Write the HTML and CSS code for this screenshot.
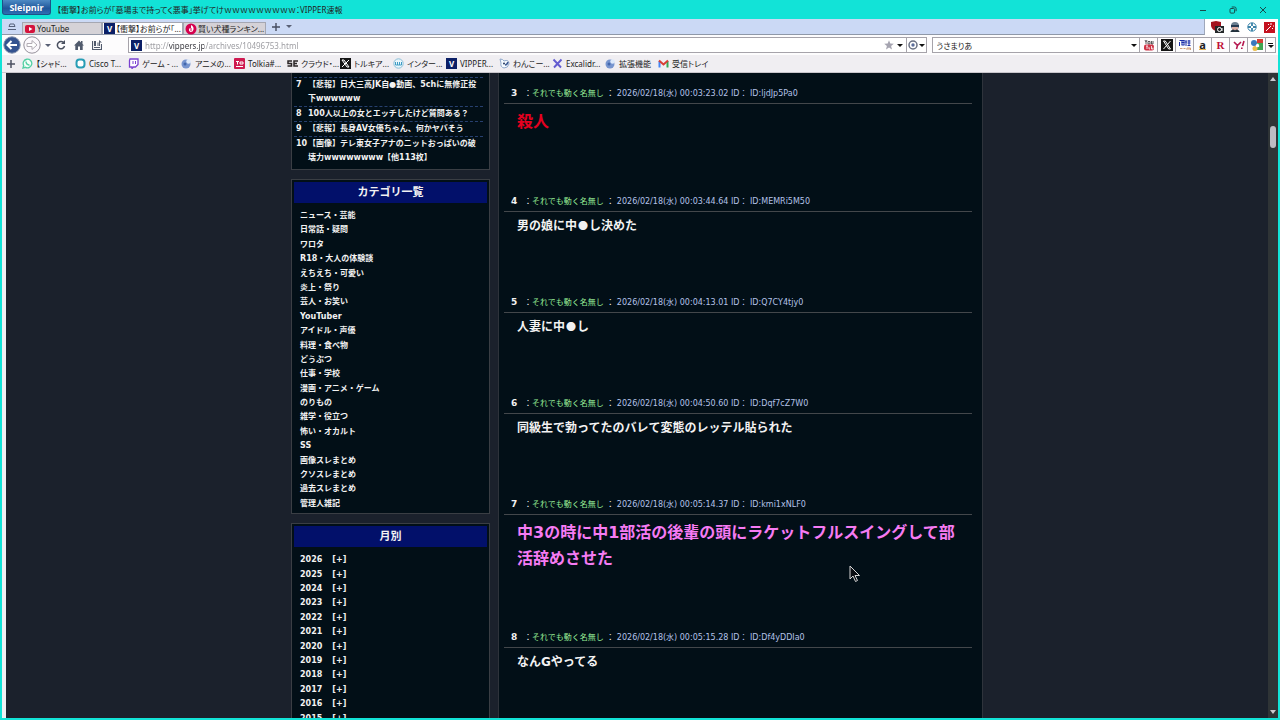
FILE: index.html
```html
<!DOCTYPE html>
<html lang="ja">
<head>
  <meta charset="UTF-8" />
  <meta name="viewport" content="width=device-width, initial-scale=1.0" />
  <title>VIPPER速報</title>
  <link rel="stylesheet" href="styles.css">
</head>
<body>
  <!-- Title bar -->
  <header class="titlebar">
    <button class="app-button" type="button">Sleipnir</button>
    <span class="window-title">【衝撃】お前らが「墓場まで持ってく悪事」挙げてけｗｗｗｗｗｗｗｗｗ：VIPPER速報</span>
    <div class="window-buttons">
      <button type="button" aria-label="最小化"><svg width="8" height="8" viewBox="0 0 8 8"><path d="M1 4.5h6" /></svg></button>
      <button type="button" aria-label="元に戻す"><svg width="8" height="8" viewBox="0 0 8 8"><rect x="1" y="2.5" width="4.6" height="4.6" rx="1" /><path d="M2.7 1h2.8q1.6 0 1.6 1.6v2.6" /></svg></button>
      <button type="button" aria-label="閉じる"><svg width="8" height="8" viewBox="0 0 8 8"><path d="M1 1l6 6M7 1l-6 6" /></svg></button>
    </div>
  </header>

  <div class="window">
    <!-- Tabs -->
    <nav class="tabbar">
      <div class="tabs">
        <button class="tab-list" type="button" aria-label="タブ一覧"><svg width="10" height="10" viewBox="0 0 10 10"><path d="M3 2h4M2 4.5h6M1 7.5h8M3 2L2 4.500M7 2l1 2.500" fill="none" stroke="#55607a" /></svg></button>
        <a class="tab" href="#"><svg width="12" height="10" viewBox="0 0 12 10"><rect x="1" y="1" width="10" height="8" rx="2" fill="#d5123c" /><path d="M5 3l3.500 2L5 7z" fill="#fff" /></svg>YouTube</a>
        <a class="tab active" href="#"><span class="v-icon">V</span>【衝撃】お前らが「...</a>
        <a class="tab" href="#"><svg width="12" height="12" viewBox="0 0 12 12"><circle cx="6" cy="6" r="5.500" fill="#d6004f" /><path d="M6 2q3 1.500 2.500 4.500Q8 9 5.500 9 3.500 8.500 4 6q.5-1 2-1z" fill="#fff" /><path d="M6 5v3" stroke="#d6004f" /></svg>賢い犬種ランキン...</a>
        <button class="tab-new" type="button" aria-label="新しいタブ"><svg width="10" height="10" viewBox="0 0 10 10"><path d="M5 1v8M1 5h8" stroke="#454c5e" stroke-width="1.400" /></svg></button>
        <span class="caret"></span>
      </div>
      <div class="extensions">
        <svg width="14" height="14" viewBox="0 0 14 14"><path d="M1 2l5-1 5 1v4q-1 4-5 5-4-1-5-5z" fill="#a3141f" /><rect x="5" y="6" width="9" height="7" fill="#24282a" /><circle cx="9.500" cy="9.500" r="2" fill="none" stroke="#fff" /><path d="M12 8v3" stroke="#fff" /></svg>
        <svg width="12" height="12" viewBox="0 0 12 12"><circle cx="6" cy="5" r="4" fill="#6c7f90" /><path d="M3 5.500h6V9H3z" fill="#dcaea4" /><rect x="2" y="4" width="8" height="2" fill="#263b52" /><path d="M1.500 11q0-2 3-2.500l1.500.8 1.500-.8q3 .5 3 2.500z" fill="#23313d" /></svg>
        <svg width="12" height="12" viewBox="0 0 12 12"><circle cx="6" cy="6" r="4.200" fill="#fff" stroke="#3a83a8" /><path d="M6 2v3M6 7v3M2 6h3M7 6h3" stroke="#3a83a8" stroke-width="1.800" /></svg>
        <svg width="12" height="12" viewBox="0 0 12 12"><rect x="1" y="1" width="11" height="11" fill="#c41220" /><path d="M3 10l5-5M8 2v2M10 5h1M5 3l1 1M9 7l1 1" stroke="#fff" /></svg>
      </div>
    </nav>

    <!-- Address bar, search box -->
    <div class="navbar">
      <button class="round back" type="button" aria-label="戻る"><svg width="18" height="18" viewBox="0 0 18 18"><circle cx="9" cy="9" r="8.200" fill="#345390" stroke="#8592ac" /><path d="M14 9H5M8.500 5L4.500 9l4 4" fill="none" stroke="#fff" stroke-width="2" /></svg></button>
      <button class="round" type="button" aria-label="進む"><svg width="18" height="18" viewBox="0 0 18 18"><circle cx="9" cy="9" r="8.200" fill="#fbf8fc" stroke="#96919b" /><path d="M4 7.500h5V4.500L14 9l-5 4.500v-3H4z" fill="#fff" stroke="#b1abb3" /></svg></button>
      <span class="caret"></span>
      <button class="tool" type="button" aria-label="更新"><svg width="10" height="10" viewBox="0 0 10 10"><path d="M8 3.200A3.600 3.600 0 1 0 8.500 6" fill="none" stroke="#4a5060" stroke-width="1.500" /><path d="M9 0v4H5z" fill="#4a5060" /></svg></button>
      <button class="tool" type="button" aria-label="ホーム"><svg width="10" height="10" viewBox="0 0 10 10"><path d="M0 5.500L5 .5l2 2V1h1.500v3L10 5.500H8.700V10H6V6.500H4V10H1.300V5.500z" fill="#515a6c" /></svg></button>
      <button class="tool" type="button" aria-label="保存"><svg width="10" height="10" viewBox="0 0 10 10"><path d="M.5 1v8.500h9V4M2 7.500h6" fill="none" stroke="#515a6c" stroke-width="1.200" /><path d="M2 1h2v5H2zM5.500 2.500h1V6h-1zM7 0l3 2.500H8V6H7z" fill="#515a6c" /></svg></button>
      <form class="address">
        <span class="v-icon">V</span>
        <input class="url" type="text" aria-label="アドレス" value="http://vippers.jp/archives/10496753.html">
        <button type="button" aria-label="お気に入り"><svg width="10" height="10" viewBox="0 0 10 10"><path d="M5 .3l1.300 3.300 3.500.2-2.700 2.200.9 3.500-3-2-3 2 .9-3.500L.2 3.800l3.500-.2z" fill="#a5a4b0" /></svg></button>
        <span class="caret dark"></span>
        <button class="engine" type="button" aria-label="エンジン切替"><svg width="10" height="10" viewBox="0 0 10 10"><circle cx="5" cy="5" r="4" fill="none" stroke="#697083" stroke-width="1.500" /><circle cx="5" cy="5" r="1.700" fill="#5c6e9b" /></svg><span class="caret dark"></span></button>
      </form>
      <form class="search">
        <input type="text" aria-label="検索" value="うさまりあ">
        <span class="caret dark"></span>
      </form>
      <div class="engines">
        <button type="button" aria-label="YouTube"><svg width="12" height="12" viewBox="0 0 12 12"><path d="M2 1l1 2v2M4 1L3 3M5 2.500h2V5H5zM8.500 2v3H10V2" fill="none" stroke="#333" stroke-width=".8" /><rect x="1" y="5.500" width="10" height="6" rx="2" fill="#cf3346" /><path d="M3 7h2M4 7v3M6 8v2h1M8.500 7v3H10V8.500" fill="none" stroke="#fff" stroke-width=".8" /></svg></button>
        <button type="button" aria-label="X"><svg width="12" height="12" viewBox="0 0 12 12"><rect width="12" height="12" fill="#151515" /><path d="M2.500 2h1.800l5.200 8H7.700zM9.500 2l-7 8" fill="none" stroke="#fff" /></svg></button>
        <button type="button" aria-label="価格.com"><svg width="12" height="12" viewBox="0 0 12 12"><path d="M.5 1.500h5M2.500 3.500h3M.5 3v4M2.500 6h3M3 1v5M5 1v5M6 3h2M7 1v6M8.500 2h3M8.500 4h3M8.500 6.500h3M10 1v5" stroke="#1c2fa8" /><path d="M1 9.500h2.500M4.500 9.500h2M8 9v2M10 9v2M11.500 9v2M8 9h3.500" stroke="#d19c75" /></svg></button>
        <button type="button" aria-label="Amazon"><b class="amazon">a</b></button>
        <button type="button" aria-label="楽天"><b class="rakuten">R</b></button>
        <button type="button" aria-label="Yahoo"><svg width="12" height="12" viewBox="0 0 12 12"><path d="M1 3l3.500 3.500L3.500 10M8 3L4.500 6.500M11 2L9.500 7M8.800 8.500v1.500" fill="none" stroke="#b5174f" stroke-width="1.600" /></svg></button>
        <button type="button" aria-label="Google"><svg width="12" height="12" viewBox="0 0 12 12"><rect x="6" y="0" width="6" height="4" fill="#d63c34" /><rect x="6" y="4" width="6" height="7" fill="#3fa552" /><circle cx="3" cy="4" r="3" fill="#3978bd" /><circle cx="4" cy="9.500" r="2.500" fill="#e9bc49" /><path d="M5 6q2-3 3 0t-3 2z" fill="#fff" /></svg></button>
        <button class="more" type="button" aria-label="その他"><span class="bar"></span><span class="caret dark"></span></button>
      </div>
    </div>

    <!-- Bookmarks -->
    <nav class="bookmarks">
      <button type="button" aria-label="追加"><svg width="10" height="10" viewBox="0 0 10 10"><path d="M5 1v8M1 5h8" stroke="#4c5161" stroke-width="1.500" /></svg></button>
      <a href="#"><svg width="11" height="11" viewBox="0 0 11 11"><path d="M1 10l.7-2.500A4.300 4.300 0 1 1 3.500 9.300z" fill="#f4fff9" stroke="#53cfa3" stroke-width="1.300" /><path d="M4 3.500q0 3 3.500 3.700" fill="none" stroke="#53cfa3" stroke-width="1.400" /></svg>【シャド...</a>
      <a href="#"><svg width="11" height="11" viewBox="0 0 11 11"><rect x="1.500" y="1.500" width="8" height="8" rx="3" fill="#fff" stroke="#289db5" stroke-width="2" /></svg>Cisco T...</a>
      <a href="#"><svg width="11" height="11" viewBox="0 0 11 11"><path d="M2 1h8v5.500L7.500 9H5.500L4 10.500V9H1.500V2.500z" fill="#fff" stroke="#7941d0" stroke-width="1.300" /><path d="M5 3v3M7.500 3v3" stroke="#7941d0" /></svg>ゲーム - ...</a>
      <a href="#"><svg width="11" height="11" viewBox="0 0 11 11"><circle cx="5" cy="6" r="4.500" fill="#7795cf" /><circle cx="7.500" cy="3.500" r="2.200" fill="#dce9fb" /><circle cx="4" cy="6" r="1.500" fill="#4267ae" /></svg>アニメの...</a>
      <a href="#"><svg width="11" height="11" viewBox="0 0 11 11"><rect width="11" height="11" rx="1" fill="#cf1950" /><path d="M2 3.500h3M3.500 3.500v3M6 4h3v2H6zM2 8.500h7" fill="none" stroke="#fff" /></svg>Tolkia#...</a>
      <a href="#"><svg width="11" height="11" viewBox="0 0 11 11"><path d="M5 3H1v2.500h3.500V8H.5M11 3H7v5h4M7 5.500h3" fill="none" stroke="#2b2728" stroke-width="1.500" /></svg>クラウド・...</a>
      <a href="#"><svg width="11" height="11" viewBox="0 0 11 11"><rect width="11" height="11" fill="#151515" /><path d="M2 2h2l5 7H7zM9 2L2 9" fill="none" stroke="#fff" /></svg>トルキア...</a>
      <a href="#"><svg width="11" height="11" viewBox="0 0 11 11"><circle cx="5.500" cy="5.500" r="4.700" fill="#e8f6fc" stroke="#8bbed7" /><path d="M2.500 4v3h2V4v3h2V4v3h2V4" fill="none" stroke="#3f9cc4" /></svg>インター...</a>
      <a href="#"><span class="v-icon">V</span>VIPPER...</a>
      <a href="#"><svg width="11" height="11" viewBox="0 0 11 11"><path d="M1 1q3 0 4 2 5-2 5 3-1 4-5 4-4-1-3-5z" fill="#f5fbff" stroke="#8fa8cb" /><circle cx="5" cy="5.500" r="1" fill="#27385d" /><path d="M6 7q2 0 3-3" fill="none" stroke="#3c5b94" stroke-width="1.500" /></svg>わんこー...</a>
      <a href="#"><svg width="11" height="11" viewBox="0 0 11 11"><path d="M1.500 1.500l7.500 8M9.500 1.500L2 9.500" stroke="#625bd0" stroke-width="1.900" /></svg>Excalidr...</a>
      <a href="#"><svg width="11" height="11" viewBox="0 0 11 11"><circle cx="5" cy="6" r="4.500" fill="#7795cf" /><circle cx="7.500" cy="3.500" r="2.200" fill="#dce9fb" /><circle cx="4" cy="6" r="1.500" fill="#4267ae" /></svg>拡張機能</a>
      <a href="#"><svg width="11" height="11" viewBox="0 0 11 11"><path d="M1.500 9.500V3" stroke="#4285f4" stroke-width="2" /><path d="M9.500 9.500V3" stroke="#34a853" stroke-width="2" /><path d="M1 2.500l4.500 4 4.500-4" fill="none" stroke="#d93f36" stroke-width="2" /></svg>受信トレイ</a>
    </nav>

    <!-- Page -->
    <div class="viewport">
      <div class="page">
        <aside class="sidebar">
          <section class="box ranking">
            <ol start="7">
              <li><span class="rank">7</span><a href="#">【悲報】日大三高JK自●動画、5chに無修正投下wwwwww</a></li>
              <li><span class="rank">8</span><a href="#">100人以上の女とエッチしたけど質問ある？</a></li>
              <li><span class="rank">9</span><a href="#">【悲報】長身AV女優ちゃん、何かヤバそう</a></li>
              <li><span class="rank">10</span><a href="#">【画像】テレ東女子アナのニットおっぱいの破壊力wwwwwwww【他113枚】</a></li>
            </ol>
          </section>
          <section class="box">
            <h2>カテゴリ一覧</h2>
            <ul>
              <li><a href="#">ニュース・芸能</a></li>
              <li><a href="#">日常話・疑問</a></li>
              <li><a href="#">ワロタ</a></li>
              <li><a href="#">R18・大人の体験談</a></li>
              <li><a href="#">えちえち・可愛い</a></li>
              <li><a href="#">炎上・祭り</a></li>
              <li><a href="#">芸人・お笑い</a></li>
              <li><a href="#">YouTuber</a></li>
              <li><a href="#">アイドル・声優</a></li>
              <li><a href="#">料理・食べ物</a></li>
              <li><a href="#">どうぶつ</a></li>
              <li><a href="#">仕事・学校</a></li>
              <li><a href="#">漫画・アニメ・ゲーム</a></li>
              <li><a href="#">のりもの</a></li>
              <li><a href="#">雑学・役立つ</a></li>
              <li><a href="#">怖い・オカルト</a></li>
              <li><a href="#">SS</a></li>
              <li><a href="#">画像スレまとめ</a></li>
              <li><a href="#">クソスレまとめ</a></li>
              <li><a href="#">過去スレまとめ</a></li>
              <li><a href="#">管理人雑記</a></li>
            </ul>
          </section>
          <section class="box">
            <h2>月別</h2>
            <ul class="months">
              <li>2026<a href="#">[+]</a></li>
              <li>2025<a href="#">[+]</a></li>
              <li>2024<a href="#">[+]</a></li>
              <li>2023<a href="#">[+]</a></li>
              <li>2022<a href="#">[+]</a></li>
              <li>2021<a href="#">[+]</a></li>
              <li>2020<a href="#">[+]</a></li>
              <li>2019<a href="#">[+]</a></li>
              <li>2018<a href="#">[+]</a></li>
              <li>2017<a href="#">[+]</a></li>
              <li>2016<a href="#">[+]</a></li>
              <li>2015<a href="#">[+]</a></li>
            </ul>
          </section>
        </aside>

        <main class="thread">
          <article class="post">
            <header><b>3</b>：<span class="name">それでも動く名無し</span> ： <span class="date">2026/02/18(水) 00:03:23.02 ID： ID:ljdJp5Pa0</span></header>
            <p class="big red">殺人</p>
          </article>
          <article class="post">
            <header><b>4</b>：<span class="name">それでも動く名無し</span> ： <span class="date">2026/02/18(水) 00:03:44.64 ID： ID:MEMRi5M50</span></header>
            <p>男の娘に中<span class="mark">●</span>し決めた</p>
          </article>
          <article class="post">
            <header><b>5</b>：<span class="name">それでも動く名無し</span> ： <span class="date">2026/02/18(水) 00:04:13.01 ID： ID:Q7CY4tjy0</span></header>
            <p>人妻に中<span class="mark">●</span>し</p>
          </article>
          <article class="post">
            <header><b>6</b>：<span class="name">それでも動く名無し</span> ： <span class="date">2026/02/18(水) 00:04:50.60 ID： ID:Dqf7cZ7W0</span></header>
            <p>同級生で勃ってたのバレて変態のレッテル貼られた</p>
          </article>
          <article class="post">
            <header><b>7</b>：<span class="name">それでも動く名無し</span> ： <span class="date">2026/02/18(水) 00:05:14.37 ID： ID:kmi1xNLF0</span></header>
            <p class="big pink">中3の時に中1部活の後輩の頭にラケットフルスイングして部活辞めさせた</p>
          </article>
          <article class="post">
            <header><b>8</b>：<span class="name">それでも動く名無し</span> ： <span class="date">2026/02/18(水) 00:05:15.28 ID： ID:Df4yDDIa0</span></header>
            <p>なんGやってる</p>
          </article>
        </main>
      </div>
      <div class="scrollbar">
        <span class="arrow up"></span>
        <div class="track"><div class="thumb"></div></div>
        <span class="arrow down"></span>
      </div>
    </div>
  </div>

  <!-- Mouse pointer -->
  <svg class="pointer" width="12" height="18" viewBox="0 0 12 18"><path d="M1 1v13l3-3 2.500 5.500 2-1L6 10.500h4.500z" fill="#0a0d12" stroke="#d5d5d5" /></svg>
</body>
</html>
```
FILE: styles.css
```css
* {
  box-sizing: border-box;
}

body {
  margin: 0;
  height: 100vh;
  display: flex;
  flex-direction: column;
  overflow: hidden;
  background: #12e3d7;
  font-family: "Noto Sans", "Noto Sans CJK JP", sans-serif;
  font-size: 8px;
  color: #222;
}

a {
  color: inherit;
  text-decoration: none;
}

button {
  display: flex;
  align-items: center;
  justify-content: center;
  padding: 0;
  border: 0;
  background: none;
  font: inherit;
  color: inherit;
}

input {
  min-width: 0;
  padding: 0;
  border: 0;
  outline: 0;
  background: none;
  font: inherit;
  color: inherit;
}

svg {
  display: block;
  flex: none;
}

ul, ol, h2, p {
  margin: 0;
  padding: 0;
  list-style: none;
}

.caret {
  flex: none;
  border: 3px solid transparent;
  border-top-color: #596075;
  border-bottom: 0;
}

.caret.dark {
  border-top-color: #111;
}

.v-icon {
  flex: none;
  width: 11px;
  height: 11px;
  background: #0b1f66;
  color: #fff;
  font-weight: bold;
  line-height: 11px;
  text-align: center;
}

/* Title bar */
.titlebar {
  flex: none;
  display: flex;
  align-items: center;
  height: 19px;
  padding: 0 8px 0 2px;
  font-feature-settings: "palt";
}

.app-button {
  align-self: flex-start;
  width: 49px;
  height: 15px;
  margin-right: 6px;
  border: 1px solid #1d5187;
  border-top: 0;
  border-radius: 0 0 3px 3px;
  background: linear-gradient(#4d8ac4, #20569a 60%, #2e70b4);
  color: #fff;
  font: bold 9px "Open Sans", sans-serif;
}

.window-title {
  flex: 1;
  white-space: nowrap;
}

.window-buttons {
  display: flex;
}

.window-buttons button {
  width: 30px;
  height: 18px;
}

.window-buttons button:last-child {
  width: 18px;
  margin-left: 6px;
}

.window-buttons svg {
  fill: none;
  stroke: #174c4c;
}

.window {
  flex: 1;
  min-height: 0;
  display: flex;
  flex-direction: column;
  margin: 0 2px 2px;
  background: #f0eef2;
}

/* Tabs */
.tabbar {
  flex: none;
  display: flex;
  height: 16px;
  background: #fff;
  font-feature-settings: "palt";
}

.tabs {
  flex: 1;
  display: flex;
  align-items: center;
  background: #cbd9f5;
  border-right: 1px solid #9fa8bb;
  border-bottom: 1px solid #8f98a8;
}

.tab-list {
  width: 20px;
}

.tab {
  display: flex;
  align-items: center;
  gap: 1px;
  min-width: 80px;
  height: 12px;
  padding: 0 1px;
  margin-top: 3px;
  white-space: nowrap;
  border: 1px solid #a5a7b2;
  border-bottom: 0;
  background: #d5d2d7;
}

.tab.active {
  background: #fff;
}

.tab-new {
  width: 20px;
}

.extensions {
  display: flex;
  align-items: center;
  justify-content: space-between;
  width: 73px;
  padding: 0 3px 0 5px;
}

/* Address bar */
.navbar {
  flex: none;
  display: flex;
  align-items: center;
  height: 20px;
  padding: 0 2px 0 1px;
  background: #fdfcfd;
}

.round {
  margin-right: 2px;
}

.navbar > .caret {
  margin: 0 1px 0 2px;
}

.tool {
  width: 18px;
}

.address,
.search {
  display: flex;
  align-items: center;
  height: 16px;
  border: 1px solid #a6a3aa;
  background: #fff;
}

.address {
  flex: 805;
  gap: 3px;
  padding-left: 2px;
  margin: 0 5px 0 22px;
}

/* the host part of the address is drawn darker */
.url {
  flex: 1;
  background: linear-gradient(90deg, #98989d 24px, #33333a 24px, #33333a 59px, #98989d 59px);
  background-clip: text;
  color: transparent;
}

.engine {
  gap: 1px;
  height: 14px;
  padding: 0 1px;
  border-left: 1px solid #a6a3aa;
}

.search {
  flex: 203;
  padding: 0 2px 0 4px;
}

.search input {
  flex: 1;
  font-feature-settings: "palt";
}

.engines {
  display: flex;
  border: 1px solid #a6a3aa;
  border-left: 0;
}

.engines button {
  width: 18px;
  height: 14px;
  border-right: 1px solid #a6a3aa;
}

.engines .more {
  flex-direction: column;
  gap: 1px;
  width: 9px;
  border: 0;
}

.bar {
  width: 5px;
  height: 1px;
  background: #111;
}

.amazon {
  font-size: 11px;
  line-height: 9px;
  border-bottom: 1px solid #e5b04c;
}

.rakuten {
  color: #c00f36;
  font: bold 11px "Liberation Serif", serif;
}

/* Bookmarks */
.bookmarks {
  flex: none;
  display: flex;
  align-items: center;
  height: 18px;
  padding-left: 3px;
  border-bottom: 1px solid #c9c6cc;
  font-feature-settings: "palt";
}

.bookmarks button {
  width: 11px;
  margin-right: 6px;
}

.bookmarks a {
  display: flex;
  align-items: center;
  gap: 3px;
  width: 53px;
  white-space: nowrap;
}

/* Page */
.viewport {
  flex: 1;
  min-height: 0;
  display: flex;
  margin-left: 4px;
  background: #1b212c;
}

.page {
  flex: 1;
  display: flex;
  justify-content: center;
  gap: 8px;
  overflow: hidden;
  font-family: "DejaVu Sans", "Noto Sans CJK JP", sans-serif;
  color: #f2f2f2;
}

.sidebar {
  width: 199px;
  font-weight: bold;
}

.box {
  margin-bottom: 9px;
  padding: 2px;
  border: 1px solid #3a3e44;
  background: #020f17;
}

.box h2 {
  background: #02106a;
  font-size: 11px;
  line-height: 21px;
  text-align: center;
}

.box ul {
  padding: 6px 6px 0;
  line-height: 1.8;
}

.ranking {
  padding: 4px 6px 4px 2px;
  border-top: 0;
}

.ranking li {
  display: flex;
  line-height: 14px;
  border-top: 1px dashed #27406f;
}

.rank {
  flex: none;
  width: 14px;
  padding-left: 2px;
}

.ranking a {
  padding-right: 5px;
  word-break: break-all;
}

.months a {
  margin-left: 10px;
}

.thread {
  width: 485px;
  padding: 13px 10px 0 5px;
  border: 1px solid #2e333b;
  border-width: 0 1px;
  background: #020f17;
}

.post {
  padding-bottom: 59px;
}

.post header {
  height: 18px;
  padding-left: 7px;
  border-bottom: 1px solid #43474b;
  line-height: 16px;
  white-space: nowrap;
}

.post b {
  display: inline-block;
  width: 13px;
  font-size: 9px;
  line-height: 1;
}

.name {
  color: #98ee98;
}

.date {
  color: #b4c2e8;
}

.post p {
  padding: 5px 13px 0;
  font-size: 12px;
  font-weight: bold;
  line-height: 1.6;
}

.post .big {
  font-size: 16px;
}

.post .red {
  color: #e6001f;
}

.post .pink {
  color: #f67bf3;
}

.mark {
  padding: 0 1px;
  font-family: "Noto Sans CJK JP", sans-serif;
  font-size: 10px;
  line-height: 1;
}

/* Scrollbar */
.scrollbar {
  display: flex;
  flex-direction: column;
  align-items: center;
  width: 10px;
  padding: 4px 0;
  background: #2f3436;
}

.track {
  flex: 1;
}

.thumb {
  width: 6px;
  height: 22px;
  margin-top: 45px;
  border-radius: 3px;
  background: #bdbcc3;
}

.arrow {
  border: 3px solid transparent;
}

.arrow.up {
  border-top: 0;
  border-bottom: 4px solid #c9c9cf;
}

.arrow.down {
  border-bottom: 0;
  border-top: 4px solid #c9c9cf;
}

.pointer {
  position: absolute;
  left: 849px;
  top: 565px;
}
```
